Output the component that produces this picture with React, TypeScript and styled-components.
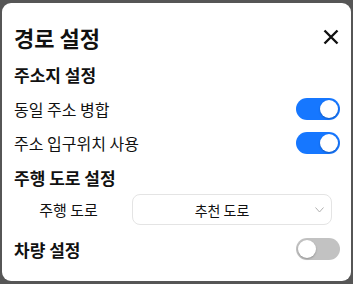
import React, { useState } from "react";
import styled, { createGlobalStyle } from "styled-components";

const Global = createGlobalStyle`
  html, body { margin: 0; padding: 0; background: #565656; }
  body { font-family: "Noto Sans CJK KR", "Noto Sans", sans-serif; color: #111; }
  * { box-sizing: border-box; }
`;

const Backdrop = styled.div`
  width: 353px;
  height: 284px;
  padding: 3px 2px 0 2px;
  background: #565656;
`;

const Card = styled.div`
  width: 349px;
  height: 278px;
  background: #fff;
  border-radius: 9px;
  padding: 14px 11px 0 12px;
  display: flex;
  flex-direction: column;
`;

const TitleRow = styled.div`
  height: 39px;
  display: flex;
  align-items: center;
  justify-content: space-between;
`;

const Title = styled.h1`
  margin: 0;
  font-size: 22px;
  font-weight: 700;
  line-height: 1;
`;

const CloseButton = styled.button`
  width: 18px;
  height: 18px;
  padding: 0;
  border: none;
  background: none;
  display: flex;
  align-items: center;
  justify-content: center;
`;

const SectionTitle = styled.div<{ $h: number }>`
  height: ${(p) => p.$h}px;
  display: flex;
  align-items: center;
  justify-content: space-between;
  font-size: 17px;
  font-weight: 700;
`;

const ToggleRow = styled.div`
  height: 34px;
  display: flex;
  align-items: center;
  justify-content: space-between;
  font-size: 16px;
`;

const Track = styled.button<{ $on: boolean }>`
  width: 44px;
  height: 22px;
  border-radius: 11px;
  border: none;
  padding: 0 2px;
  display: flex;
  align-items: center;
  justify-content: ${(p) => (p.$on ? "flex-end" : "flex-start")};
  background: ${(p) => (p.$on ? "#1677ff" : "#c2c2c2")};
  cursor: pointer;
`;

const Knob = styled.span`
  width: 18px;
  height: 18px;
  border-radius: 50%;
  background: #fff;
  box-shadow: 0 1px 2px rgba(0, 0, 0, 0.25);
`;

const SelectRow = styled.div`
  height: 31px;
  display: flex;
  align-items: center;
`;

const SelectLabel = styled.div`
  width: 109px;
  text-align: center;
  font-size: 15px;
  margin-right: 9px;
`;

const SelectBox = styled.div`
  width: 200px;
  height: 31px;
  border: 1px solid #e4e4e4;
  border-radius: 8px;
  display: flex;
  align-items: center;
  position: relative;
  padding-right: 20px;
  font-size: 14px;
`;

const SelectValue = styled.span`
  flex: 1;
  text-align: center;
`;

const Chevron = styled.svg`
  position: absolute;
  right: 7px;
  top: 12px;
`;

function Toggle({ initial }: { initial: boolean }) {
  const [on, setOn] = useState(initial);
  return (
    <Track $on={on} onClick={() => setOn(!on)} aria-pressed={on}>
      <Knob />
    </Track>
  );
}

export default function App() {
  return (
    <>
      <Global />
      <Backdrop>
        <Card>
          <TitleRow>
            <Title>경로 설정</Title>
            <CloseButton aria-label="닫기">
              <svg width="16" height="16" viewBox="0 0 16 16">
                <path d="M1.5 1.5 L14.5 14.5 M14.5 1.5 L1.5 14.5" stroke="#111" strokeWidth="2.4" strokeLinecap="butt" />
              </svg>
            </CloseButton>
          </TitleRow>
          <SectionTitle $h={36}>주소지 설정</SectionTitle>
          <ToggleRow>
            동일 주소 병합
            <Toggle initial={true} />
          </ToggleRow>
          <ToggleRow>
            주소 입구위치 사용
            <Toggle initial={true} />
          </ToggleRow>
          <SectionTitle $h={34}>주행 도로 설정</SectionTitle>
          <SelectRow>
            <SelectLabel>주행 도로</SelectLabel>
            <SelectBox>
              <SelectValue>추천 도로</SelectValue>
              <Chevron width="9" height="6" viewBox="0 0 9 6">
                <path d="M0.5 0.5 L4.5 5 L8.5 0.5" fill="none" stroke="#b0b0b0" strokeWidth="1" />
              </Chevron>
            </SelectBox>
          </SelectRow>
          <SectionTitle $h={48}>
            차량 설정
            <Toggle initial={false} />
          </SectionTitle>
        </Card>
      </Backdrop>
    </>
  );
}
